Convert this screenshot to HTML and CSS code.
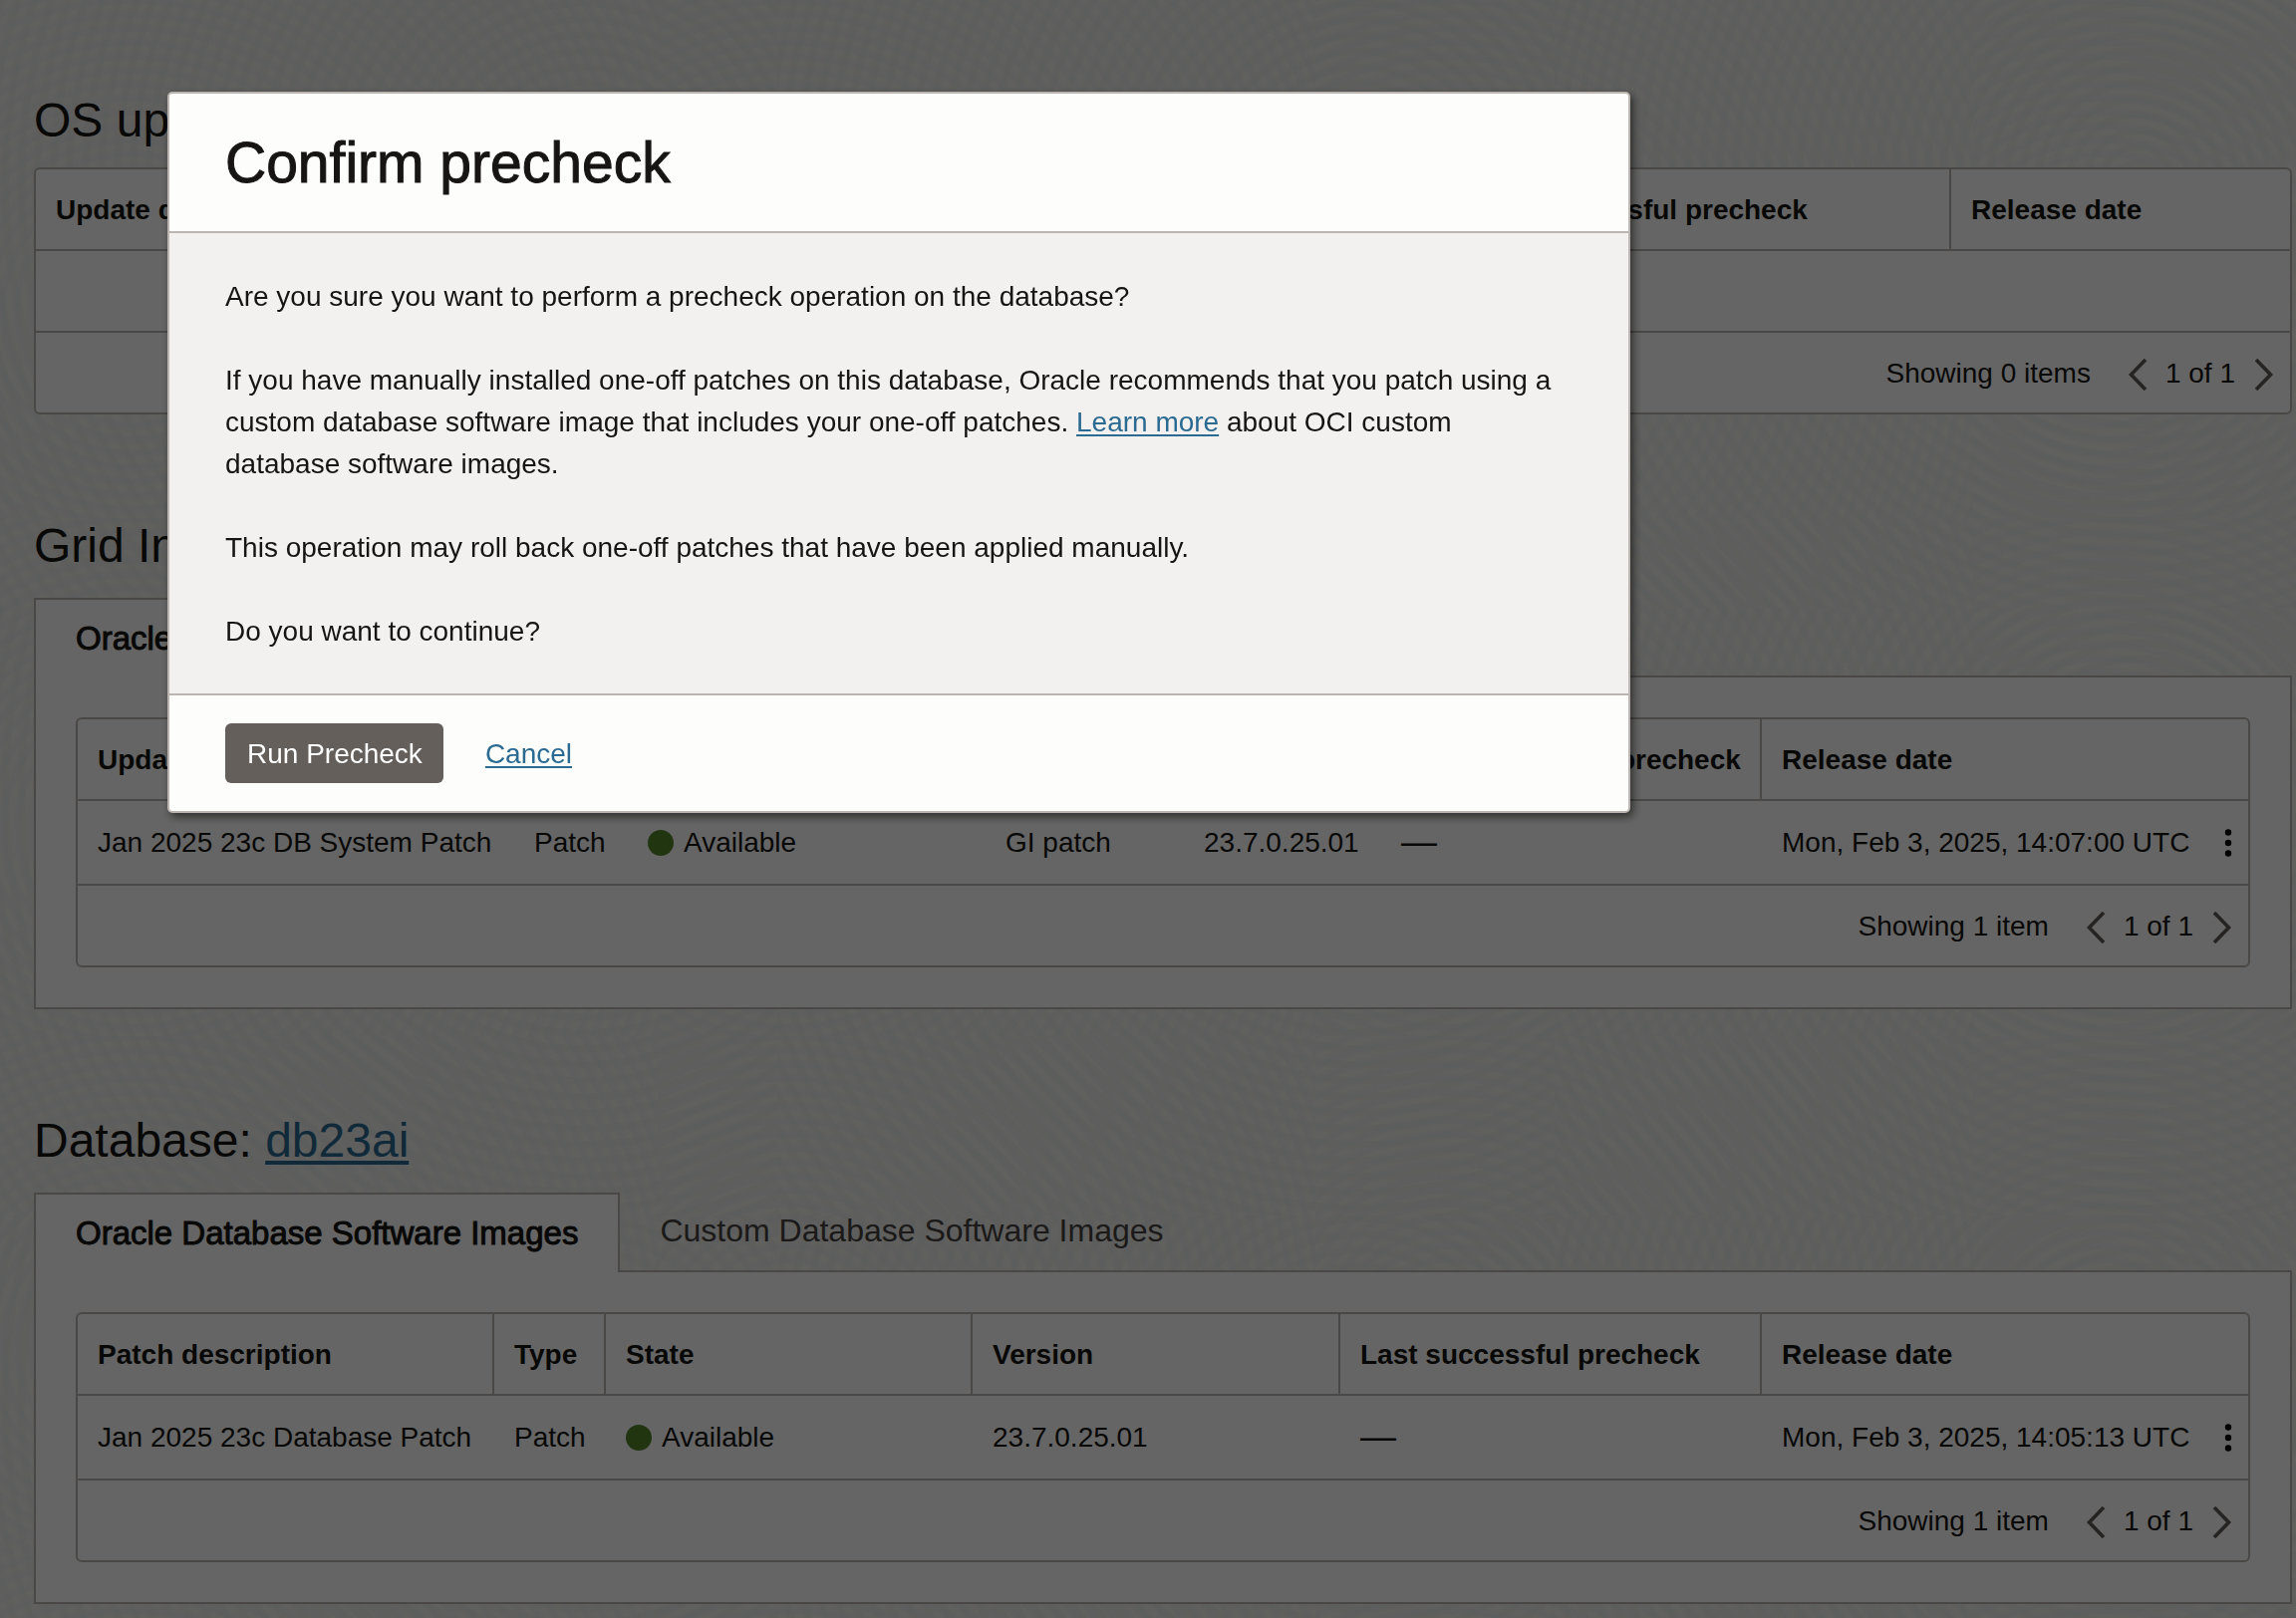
FILE: index.html
```html
<!DOCTYPE html>
<html lang="en">
<head>
<meta charset="utf-8">
<meta name="viewport" content="width=device-width, initial-scale=1">
<title>Updates - Confirm precheck</title>
<link rel="stylesheet" href="styles.css">
</head>
<body>
<svg class="sprite" aria-hidden="true">
  <symbol id="prev" viewBox="0 0 20 32"><path d="M17 1 2.500 16 17 31" fill="none" stroke="currentColor" stroke-width="3.600"/></symbol>
  <symbol id="next" viewBox="0 0 20 32"><path d="M2 1 16.500 16 2 31" fill="none" stroke="currentColor" stroke-width="3.600"/></symbol>
  <symbol id="more" viewBox="0 0 8 28"><circle cx="4" cy="3.500" r="3.200"/><circle cx="4" cy="14" r="3.200"/><circle cx="4" cy="24.500" r="3.200"/></symbol>
</svg>

<main class="page">
  <section class="section">
    <h2 class="heading">OS updates</h2>
    <div class="grid-box">
      <table class="grid">
        <colgroup><col class="os-description"><col class="os-type"><col class="os-state"><col class="os-precheck"><col></colgroup>
        <thead><tr><th>Update description</th><th>Type</th><th>State</th><th>Last successful precheck</th><th>Release date</th></tr></thead>
        <tbody><tr class="empty"><td colspan="5"></td></tr></tbody>
      </table>
      <div class="pager">
        <span>Showing 0 items</span>
        <div class="pages">
          <button class="step" aria-label="Previous page"><svg><use href="#prev"/></svg></button>
          <span class="count">1 of 1</span>
          <button class="step" aria-label="Next page"><svg><use href="#next"/></svg></button>
        </div>
      </div>
    </div>
  </section>

  <section class="section">
    <h2 class="heading">Grid Infrastructure</h2>
    <div class="tabs" role="tablist">
      <button class="tab active" role="tab" aria-selected="true">Oracle Grid Infrastructure Images</button>
    </div>
    <div class="panel" role="tabpanel">
      <div class="grid-box">
        <table class="grid">
          <colgroup><col class="gi-description"><col class="gi-type"><col class="gi-state"><col class="gi-component"><col class="gi-version"><col class="gi-precheck"><col><col class="actions"></colgroup>
          <thead><tr><th>Update description</th><th>Type</th><th>State</th><th>Component</th><th>Version</th><th>Last successful precheck</th><th colspan="2">Release date</th></tr></thead>
          <tbody><tr>
            <td>Jan 2025 23c DB System Patch</td><td>Patch</td><td><span class="state">Available</span></td><td>GI patch</td><td>23.7.0.25.01</td><td><span class="none">—</span></td><td>Mon, Feb 3, 2025, 14:07:00 UTC</td>
            <td class="menu-cell"><button class="more" aria-label="Actions"><svg><use href="#more"/></svg></button></td>
          </tr></tbody>
        </table>
        <div class="pager">
          <span>Showing 1 item</span>
          <div class="pages">
            <button class="step" aria-label="Previous page"><svg><use href="#prev"/></svg></button>
            <span class="count">1 of 1</span>
            <button class="step" aria-label="Next page"><svg><use href="#next"/></svg></button>
          </div>
        </div>
      </div>
    </div>
  </section>

  <section class="section">
    <h2 class="heading">Database: <a href="#db23ai">db23ai</a></h2>
    <div class="tabs" role="tablist">
      <button class="tab active" role="tab" aria-selected="true">Oracle Database Software Images</button>
      <button class="tab" role="tab" aria-selected="false">Custom Database Software Images</button>
    </div>
    <div class="panel" role="tabpanel">
      <div class="grid-box">
        <table class="grid">
          <colgroup><col class="db-description"><col class="db-type"><col class="db-state"><col class="db-version"><col class="db-precheck"><col><col class="actions"></colgroup>
          <thead><tr><th>Patch description</th><th>Type</th><th>State</th><th>Version</th><th>Last successful precheck</th><th colspan="2">Release date</th></tr></thead>
          <tbody><tr>
            <td>Jan 2025 23c Database Patch</td><td>Patch</td><td><span class="state">Available</span></td><td>23.7.0.25.01</td><td><span class="none">—</span></td><td>Mon, Feb 3, 2025, 14:05:13 UTC</td>
            <td class="menu-cell"><button class="more" aria-label="Actions"><svg><use href="#more"/></svg></button></td>
          </tr></tbody>
        </table>
        <div class="pager">
          <span>Showing 1 item</span>
          <div class="pages">
            <button class="step" aria-label="Previous page"><svg><use href="#prev"/></svg></button>
            <span class="count">1 of 1</span>
            <button class="step" aria-label="Next page"><svg><use href="#next"/></svg></button>
          </div>
        </div>
      </div>
    </div>
  </section>
</main>

<div class="overlay">
  <div class="dialog" role="dialog" aria-modal="true" aria-labelledby="dialog-title">
    <header class="dialog-head"><h1 class="dialog-title" id="dialog-title">Confirm precheck</h1></header>
    <div class="dialog-body">
      <p>Are you sure you want to perform a precheck operation on the database?</p>
      <p>If you have manually installed one-off patches on this database, Oracle recommends that you patch using a custom database software image that includes your one-off patches. <a href="#learn-more">Learn more</a> about OCI custom database software images.</p>
      <p>This operation may roll back one-off patches that have been applied manually.</p>
      <p>Do you want to continue?</p>
    </div>
    <footer class="dialog-foot">
      <button class="primary">Run Precheck</button>
      <a href="#cancel">Cancel</a>
    </footer>
  </div>
</div>
</body>
</html>
```
FILE: styles.css
```css
:root {
  --ink: #161513;
  --ink-soft: #45423f;
  --line: #bab5b0;
  --surface: #fdfdfc;
  --link: #2b6a91;
}

* { box-sizing: border-box; }

body {
  margin: 0;
  color: var(--ink);
  font: 28px/42px "Liberation Sans", Arial, sans-serif;
  background-color: #f0efeb;
  background-image:
    repeating-radial-gradient(circle at 20% 60%, rgba(200, 215, 235, .12) 0 5px, transparent 9px 14px),
    repeating-radial-gradient(circle at 75% 30%, rgba(90, 100, 120, .03) 0 5px, transparent 9px 16px);
  background-size: 660px 520px, 780px 610px;
}

button { font: inherit; color: inherit; cursor: pointer; }
a { color: var(--link); text-underline-offset: 3px; }
.sprite { display: none; }

.page {
  min-height: 100vh;
  padding: 93px 4px 14px 34px;
}

.section + .section { margin-top: 104px; }

.heading {
  margin: 0 0 19px;
  font-size: 48px;
  font-weight: 400;
  line-height: 56px;
}

.heading a {
  text-decoration-thickness: 4px;
  text-underline-offset: 4px;
}

/* Tabs */
.tabs {
  display: flex;
  align-items: flex-start;
  margin-top: 24px;
}

.tab {
  height: 78px;
  padding: 18px 40px 20px;
  border: 0;
  background: none;
  color: var(--ink-soft);
  font-size: 32px;
  line-height: 40px;
}

.tab.active {
  position: relative;
  height: 80px;
  margin-bottom: -2px;
  padding: 0 40px;
  border: 2px solid var(--line);
  border-bottom: 0;
  background: var(--surface);
  color: var(--ink);
  font-size: 33px;
  -webkit-text-stroke: 1px;
}

.panel {
  padding: 40px;
  border: 2px solid var(--line);
  background: var(--surface);
}

/* Data grids */
.grid-box {
  overflow: hidden;
  border: 2px solid var(--line);
  border-radius: 6px;
  background: var(--surface);
}

.grid {
  width: 100%;
  table-layout: fixed;
  border-collapse: separate;
  border-spacing: 0;
}

.grid th, .grid td {
  padding: 0 20px;
  text-align: left;
  white-space: nowrap;
  border-bottom: 2px solid var(--line);
}

.grid th { height: 82px; padding-top: 2px; font-weight: 700; }
.grid th:not(:last-child) { border-right: 2px solid var(--line); }
.grid td { height: 85px; }
.grid .empty td { height: 82px; }

.os-description { width: 620px; }
.os-type { width: 240px; }
.os-state { width: 557px; }
.os-precheck { width: 505px; }

.gi-description { width: 438px; }
.gi-type { width: 114px; }
.gi-state { width: 359px; }
.gi-component { width: 199px; }
.gi-version { width: 198px; }
.gi-precheck { width: 382px; }

.db-description { width: 418px; }
.db-type { width: 112px; }
.db-state { width: 368px; }
.db-version { width: 369px; }
.db-precheck { width: 423px; }

.actions { width: 40px; }

.state { display: flex; align-items: center; gap: 10px; }
.state::before {
  content: "";
  width: 26px;
  height: 26px;
  border-radius: 50%;
  background: #55842c;
}

.none { display: block; padding-bottom: 2px; font-size: 36px; line-height: 40px; }

.grid .menu-cell { padding: 0; }
.more {
  display: grid;
  place-items: center;
  width: 40px;
  height: 42px;
  padding: 0;
  border: 0;
  background: none;
}
.more svg { width: 8px; height: 28px; }

.pager {
  display: flex;
  justify-content: flex-end;
  align-items: center;
  gap: 38px;
  height: 80px;
  padding: 2px 16px 0 0;
}
.pages { display: flex; align-items: center; gap: 17px; }
.count { padding-right: 2px; }
.step {
  width: 20px;
  height: 32px;
  margin-top: 2px;
  padding: 0;
  border: 0;
  background: none;
  color: #5f5b57;
}
.step svg { display: block; width: 20px; height: 32px; }

/* Dialog */
.overlay {
  position: fixed;
  inset: 0;
  display: flex;
  align-items: flex-start;
  padding: 92px 168px;
  background: rgba(0, 0, 0, .6);
}

.dialog {
  width: 100%;
  max-width: 1468px;
  border: 2px solid var(--line);
  border-radius: 5px;
  overflow: hidden;
  background: var(--surface);
  box-shadow: 3px 4px 8px rgba(0, 0, 0, .55);
}

.dialog-head {
  padding: 37px 56px;
  border-bottom: 2px solid var(--line);
}

.dialog-title {
  margin: 0;
  font-size: 57px;
  font-weight: 400;
  line-height: 64px;
  -webkit-text-stroke: 1px;
}

.dialog-body {
  padding: 43px 56px 41px;
  background: #f3f1f0;
}
.dialog-body p { margin: 0; }
.dialog-body p + p { margin-top: 42px; }

.dialog-foot {
  display: flex;
  align-items: baseline;
  gap: 42px;
  padding: 28px 56px;
  border-top: 2px solid var(--line);
}

.primary {
  height: 60px;
  padding: 2px 21px 0 22px;
  border: 0;
  border-radius: 6px;
  background: #655f5b;
  color: #fff;
}
```
